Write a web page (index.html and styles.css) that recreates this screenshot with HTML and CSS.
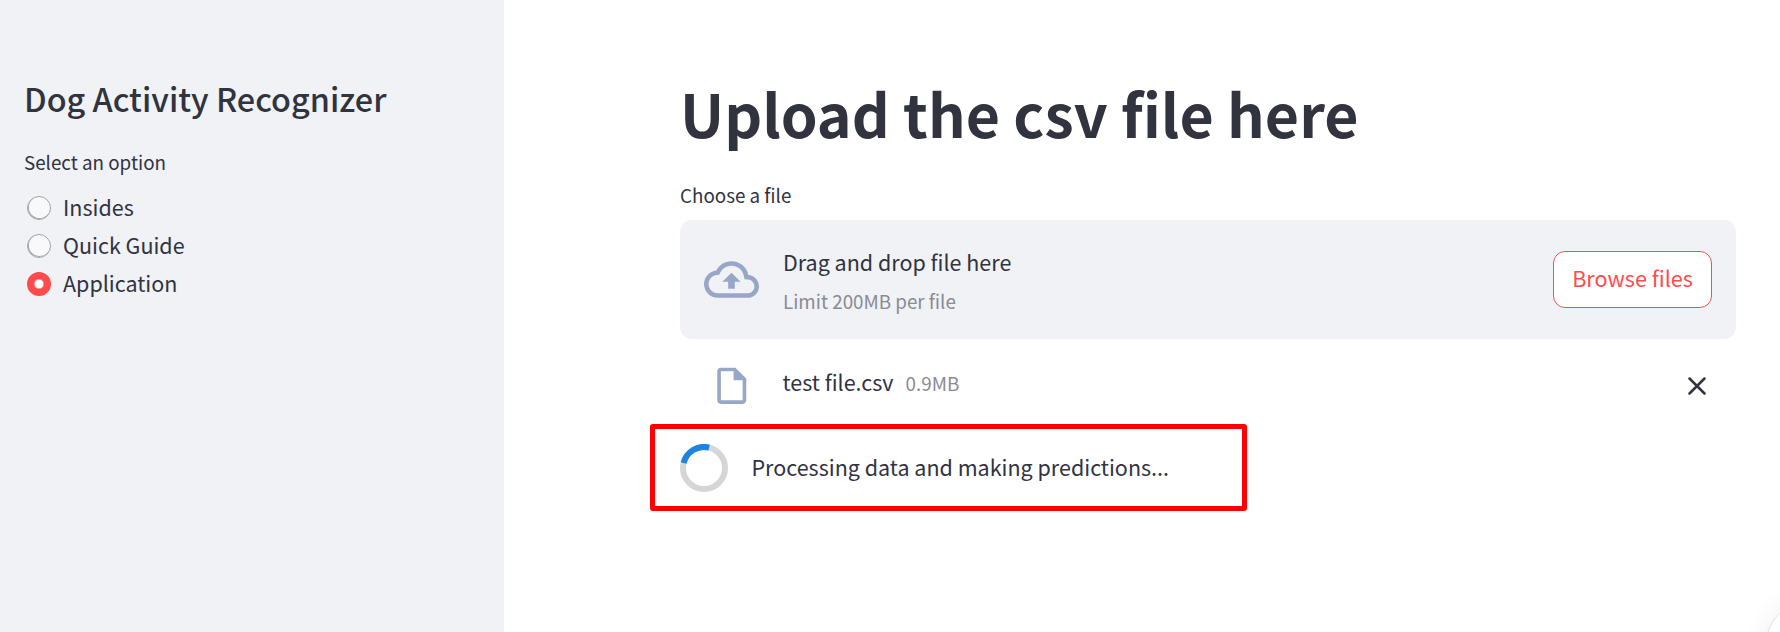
FILE: index.html
```html
<!DOCTYPE html>
<html lang="en">
<head>
<meta charset="utf-8">
<title>Dog Activity Recognizer</title>
<link rel="stylesheet" href="styles.css">
</head>
<body>
<div class="app">
  <aside class="sidebar">
    <h2 class="app-title">Dog Activity Recognizer</h2>
    <div class="group-label">Select an option</div>
    <div class="options">
      <label class="option"><span class="radio"></span><span class="option-text">Insides</span></label>
      <label class="option"><span class="radio"></span><span class="option-text">Quick Guide</span></label>
      <label class="option"><span class="radio checked"></span><span class="option-text">Application</span></label>
    </div>
  </aside>
  <main class="main">
    <h1 class="page-title">Upload the csv file here</h1>
    <div class="upload-label">Choose a file</div>
    <section class="dropzone">
      <svg class="cloud" viewBox="0 0 24 24"><path d="M19.35 10.04A7.49 7.49 0 0012 4C9.11 4 6.6 5.64 5.35 8.04A5.994 5.994 0 000 14c0 3.31 2.69 6 6 6h13c2.76 0 5-2.24 5-5 0-2.64-2.05-4.78-4.65-4.96zM19 18H6c-2.21 0-4-1.79-4-4 0-2.05 1.53-3.76 3.56-3.97l1.07-.11.5-.95A5.469 5.469 0 0112 6c2.62 0 4.88 1.86 5.39 4.43l.3 1.5 1.53.11A2.98 2.98 0 0122 15c0 1.65-1.35 3-3 3zM8 13h2.55v3h2.9v-3H16l-4-4z"/></svg>
      <div class="instructions">
        <span class="drag">Drag and drop file here</span>
        <span class="limit">Limit 200MB per file</span>
      </div>
      <button class="browse">Browse files</button>
    </section>
    <div class="file-row">
      <svg class="file-icon" viewBox="0 0 24 24"><path d="M14 2H6c-1.1 0-1.99.9-1.99 2L4 20c0 1.1.89 2 1.99 2H18c1.1 0 2-.9 2-2V8l-6-6zM6 20V4h7v5h5v11H6z"/></svg>
      <span class="file-name">test file.csv</span>
      <span class="file-size">0.9MB</span>
      <svg class="close" viewBox="0 0 18 18"><path d="M1.5 1.5l15 15M16.5 1.5l-15 15"/></svg>
    </div>
    <div class="status">
      <svg class="spinner" viewBox="0 0 48 48"><circle class="track" cx="24" cy="24" r="21"/><path class="arc" d="M3.6 19A21 21 0 0 1 29.1 3.6"/></svg>
      <span class="status-text">Processing data and making predictions...</span>
    </div>
  </main>
  <div class="corner-badge"></div>
</div>
</body>
</html>
```
FILE: styles.css
```css
* { box-sizing: border-box; }
body {
  margin: 0;
  font-family: "Noto Sans CJK SC", "Noto Sans", sans-serif;
  font-size: 21.5px;
  color: #31333f;
  background: #fff;
}
.app { position: relative; display: flex; height: 632px; overflow: hidden; }
.sidebar { width: 504px; flex: none; background: #f0f2f6; padding: 76px 24px 0; }
.app-title { margin: 0; font-size: 32.4px; line-height: 44px; font-weight: 500; white-space: nowrap; }
.group-label { margin-top: 27px; font-size: 18.8px; line-height: 30px; }
.options { display: grid; gap: 2px; margin-top: 12px; }
.option { display: flex; align-items: center; height: 36px; padding-left: 3px; gap: 12px; }
.option-text { line-height: 36px; }
.radio { width: 24px; height: 24px; margin-top: 2px; border: 1px solid #a3a5ae; border-radius: 50%; background: #f9f9fb; box-shadow: inset 0.6px -0.6px 0 0.3px #a3a5ae; }
.radio.checked { background: #fff; border: 7.5px solid #ff4b4b; box-shadow: inset 0 0 0 0.5px #ff4b4b; }
.main { flex: 1; padding: 81px 44px 0 176px; }
.page-title { margin: 0; font-size: 59px; line-height: 64px; font-weight: 700; white-space: nowrap; }
.upload-label { margin-top: 35px; font-size: 18.8px; line-height: 30px; }
.dropzone { display: flex; align-items: center; margin-top: 10px; height: 119px; padding: 0 24px; border-radius: 12px; background: #f0f2f6; }
.cloud { width: 55px; height: 55px; fill: #98a7c7; }
.instructions { display: grid; margin-left: 24px; flex: 1; }
.drag { line-height: 42px; }
.limit { font-size: 18.8px; line-height: 36px; color: #8a8b94; }
.browse { width: 159px; height: 57px; padding: 0 0 5px; border: 1px solid #ff4b4b; border-radius: 12px; background: #fff; color: #ff4b4b; font-family: inherit; font-size: 21.6px; }
.file-row { display: flex; align-items: center; height: 48px; margin-top: 22px; padding: 0 30px; }
.file-icon { width: 43.5px; height: 43.5px; margin-top: 1px; fill: #98a7c7; }
.file-name { margin-left: 29px; padding-bottom: 6px; line-height: 40px; }
.file-size { margin-left: 12px; padding-bottom: 4px; flex: 1; font-size: 18.8px; line-height: 40px; color: #8a8b94; }
.close { width: 18px; height: 18px; margin-top: 2px; fill: none; stroke: #31333f; stroke-width: 2.5; stroke-linecap: round; }
.status { display: flex; align-items: center; width: 597px; height: 87px; margin: 15px 0 0 -30px; padding-left: 25px; border: 5px solid #f00; border-radius: 3px; }
.spinner { width: 48px; height: 48px; fill: none; stroke-width: 6; }
.track { stroke: #d6d6d9; }
.arc { stroke: #1c83e1; }
.status-text { margin-left: 23.5px; padding-bottom: 2px; }
.corner-badge { position: absolute; left: 1765px; top: 601px; width: 90px; height: 90px; border-radius: 50%; border: 1px solid #dfe0ec; box-shadow: 0 0 24px rgba(49, 51, 63, 0.08); }
```
